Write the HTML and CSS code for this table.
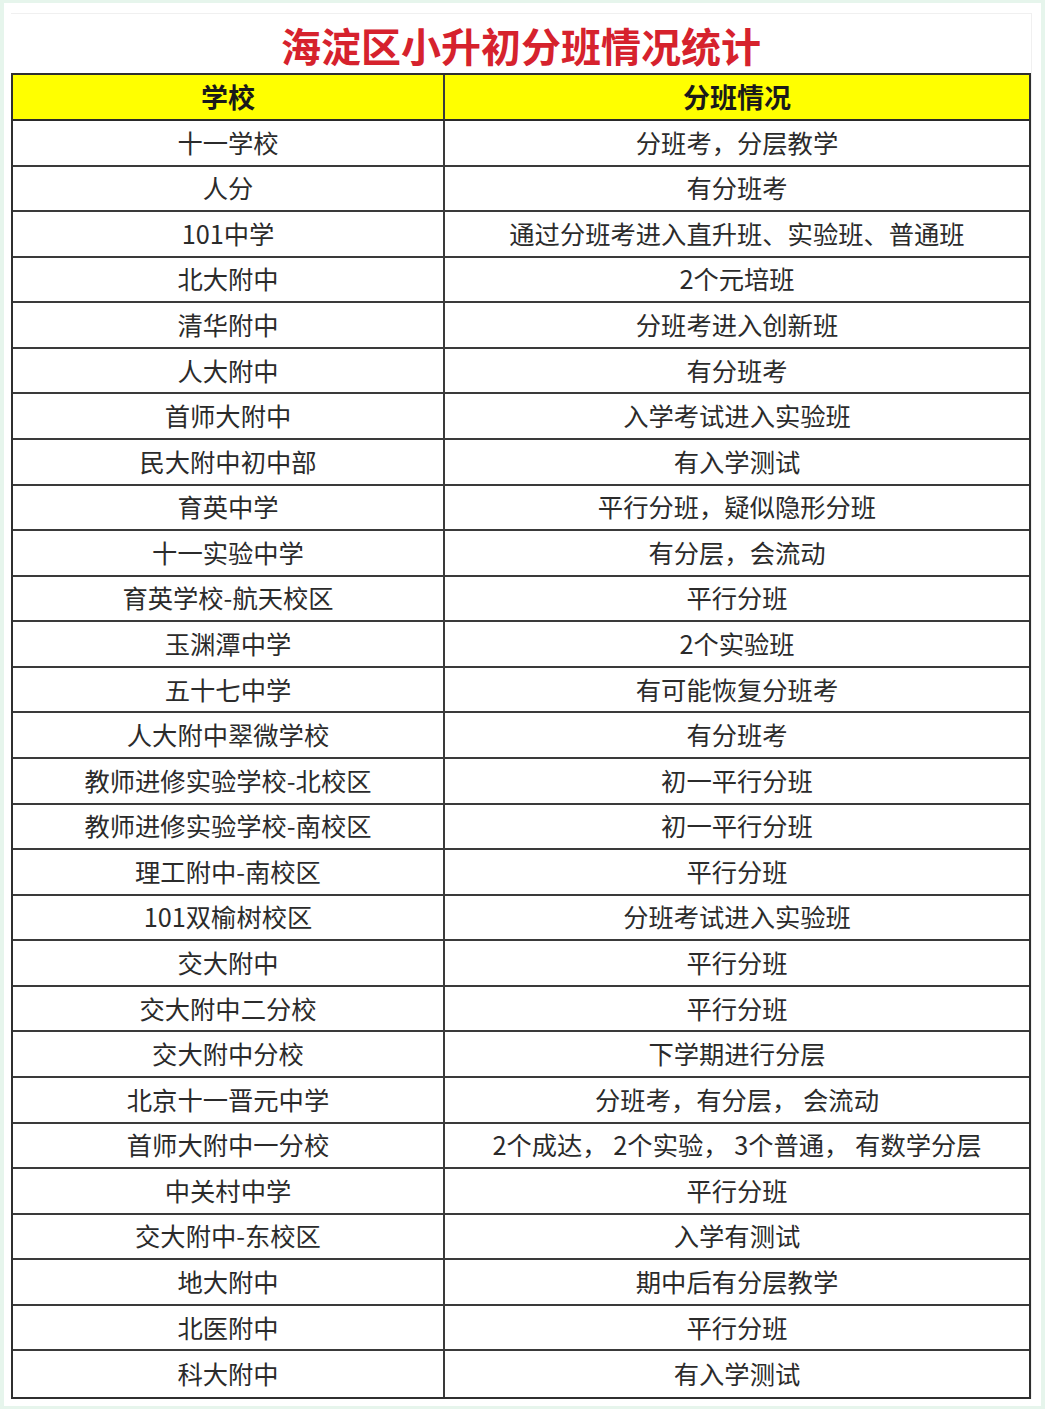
FILE: index.html
```html
<!DOCTYPE html>
<html lang="zh">
<head>
<meta charset="utf-8">
<title>海淀区小升初分班情况统计</title>
<link rel="stylesheet" href="styles.css">
</head>
<body>
<div class="sheet">
  <div class="card">
    <h1 class="title">海淀区小升初分班情况统计</h1>
    <div class="tbl">
      <div class="cell head">学校</div><div class="cell head last">分班情况</div>
      <div class="cell">十一学校</div><div class="cell last">分班考，分层教学</div>
      <div class="cell">人分</div><div class="cell last">有分班考</div>
      <div class="cell">101中学</div><div class="cell last">通过分班考进入直升班、实验班、普通班</div>
      <div class="cell">北大附中</div><div class="cell last">2个元培班</div>
      <div class="cell">清华附中</div><div class="cell last">分班考进入创新班</div>
      <div class="cell">人大附中</div><div class="cell last">有分班考</div>
      <div class="cell">首师大附中</div><div class="cell last">入学考试进入实验班</div>
      <div class="cell">民大附中初中部</div><div class="cell last">有入学测试</div>
      <div class="cell">育英中学</div><div class="cell last">平行分班，疑似隐形分班</div>
      <div class="cell">十一实验中学</div><div class="cell last">有分层，会流动</div>
      <div class="cell">育英学校-航天校区</div><div class="cell last">平行分班</div>
      <div class="cell">玉渊潭中学</div><div class="cell last">2个实验班</div>
      <div class="cell">五十七中学</div><div class="cell last">有可能恢复分班考</div>
      <div class="cell">人大附中翠微学校</div><div class="cell last">有分班考</div>
      <div class="cell">教师进修实验学校-北校区</div><div class="cell last">初一平行分班</div>
      <div class="cell">教师进修实验学校-南校区</div><div class="cell last">初一平行分班</div>
      <div class="cell">理工附中-南校区</div><div class="cell last">平行分班</div>
      <div class="cell">101双榆树校区</div><div class="cell last">分班考试进入实验班</div>
      <div class="cell">交大附中</div><div class="cell last">平行分班</div>
      <div class="cell">交大附中二分校</div><div class="cell last">平行分班</div>
      <div class="cell">交大附中分校</div><div class="cell last">下学期进行分层</div>
      <div class="cell">北京十一晋元中学</div><div class="cell last">分班考，有分层， 会流动</div>
      <div class="cell">首师大附中一分校</div><div class="cell last">2个成达， 2个实验， 3个普通， 有数学分层</div>
      <div class="cell">中关村中学</div><div class="cell last">平行分班</div>
      <div class="cell">交大附中-东校区</div><div class="cell last">入学有测试</div>
      <div class="cell">地大附中</div><div class="cell last">期中后有分层教学</div>
      <div class="cell">北医附中</div><div class="cell last">平行分班</div>
      <div class="cell bottom">科大附中</div><div class="cell last bottom">有入学测试</div>
    </div>
  </div>
</div>
</body>
</html>
```
FILE: styles.css
```css
* { box-sizing: border-box; }
html, body {
  margin: 0;
  padding: 0;
  background: #e6f5ec;
}
body {
  padding: 3px 4px 3px 4px;
  font-family: "Noto Sans CJK SC", "Noto Sans", sans-serif;
}
.sheet {
  background: #ffffff;
  height: 1403px;
  padding: 10px 10px 0 7px;
}
.card {
  width: 1021px;
  border-top: 1px solid #f0f0f0;
  border-right: 1px solid #f0f0f0;
}
.title {
  margin: 0;
  height: 59px;
  line-height: 62px;
  text-align: center;
  font-size: 40px;
  font-weight: 700;
  color: #d6222d;
  letter-spacing: 0;
}
.tbl {
  width: 1020px;
  height: 1326px;
  display: grid;
  grid-template-columns: 432px 1fr;
  grid-template-rows: 46px repeat(28, 1fr);
  border: 2px solid #2f2f2f;
}
.cell {
  display: flex;
  align-items: center;
  justify-content: center;
  border-right: 2px solid #3a3a3a;
  border-bottom: 2px solid #3a3a3a;
  font-size: 25.3px;
  color: #2b2b2b;
  white-space: nowrap;
  padding-bottom: 2px;
}
.cell.last { border-right: none; }
.cell.bottom { border-bottom: none; }
.cell.head {
  background: #ffff00;
  font-weight: 700;
  color: #1a1a1a;
  font-size: 27px;
  border-bottom-color: #2a2a2a;
}
```
